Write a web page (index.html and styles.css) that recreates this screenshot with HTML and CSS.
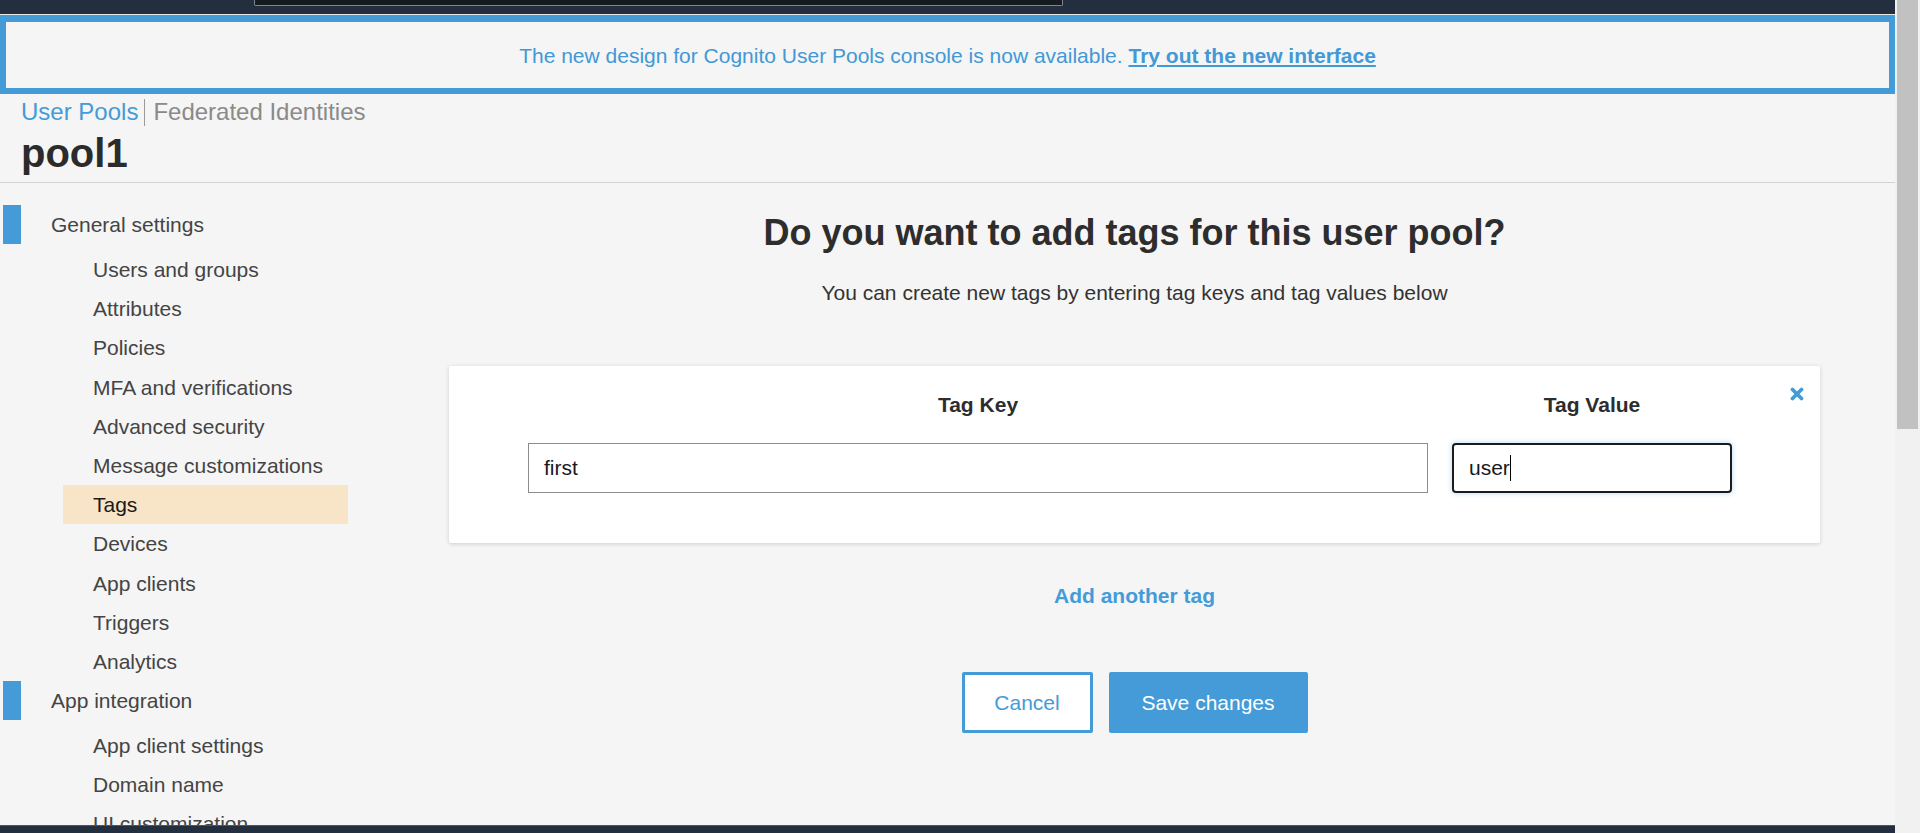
FILE: index.html
```html
<!DOCTYPE html>
<html lang="en">
<head>
<meta charset="utf-8">
<title>Cognito User Pools - pool1 - Tags</title>
<link rel="stylesheet" href="styles.css">
</head>
<body>
<div class="window">
  <div class="page">
    <header class="topbar">
      <div class="search"></div>
    </header>
    <div class="banner">
      <p>The new design for Cognito User Pools console is now available. <a href="#">Try out the new interface</a></p>
    </div>
    <div class="head">
      <nav class="tabs">
        <a class="tab active" href="#">User Pools</a>
        <span class="sep"></span>
        <a class="tab" href="#">Federated Identities</a>
      </nav>
      <h1 class="pool">pool1</h1>
    </div>
    <div class="body">
      <aside class="sidebar">
        <div class="section"><span class="marker"></span><span class="section-title">General settings</span></div>
        <ul class="items">
          <li>Users and groups</li>
          <li>Attributes</li>
          <li>Policies</li>
          <li>MFA and verifications</li>
          <li>Advanced security</li>
          <li>Message customizations</li>
          <li class="active">Tags</li>
          <li>Devices</li>
          <li>App clients</li>
          <li>Triggers</li>
          <li>Analytics</li>
        </ul>
        <div class="section"><span class="marker"></span><span class="section-title">App integration</span></div>
        <ul class="items">
          <li>App client settings</li>
          <li>Domain name</li>
          <li>UI customization</li>
        </ul>
      </aside>
      <main class="main">
        <h2 class="title">Do you want to add tags for this user pool?</h2>
        <p class="sub">You can create new tags by entering tag keys and tag values below</p>
        <section class="card">
          <button class="close" aria-label="Remove tag">
            <svg width="14" height="14" viewBox="0 0 14 14"><path d="M2.5 2.5 L11.5 11.5 M11.5 2.5 L2.5 11.5" stroke="#449bd8" stroke-width="3.8" stroke-linecap="round" fill="none"/></svg>
          </button>
          <div class="grid">
            <div class="label">Tag Key</div>
            <div class="label">Tag Value</div>
            <div class="field">first</div>
            <div class="field focused"><span class="val">user</span></div>
          </div>
        </section>
        <a class="add" href="#">Add another tag</a>
        <div class="actions">
          <button class="btn cancel">Cancel</button>
          <button class="btn save">Save changes</button>
        </div>
      </main>
    </div>
    <footer class="bottombar"></footer>
  </div>
  <div class="scrollbar"><div class="thumb"></div></div>
</div>
</body>
</html>
```

FILE: styles.css
```css
* { box-sizing: border-box; }
html, body { margin: 0; padding: 0; }
body {
  font-family: "Liberation Sans", Arial, sans-serif;
  background: #f1f1f1;
  height: 833px;
  overflow: hidden;
  color: #444;
}
.window { display: flex; height: 833px; }
.page {
  width: 1895px;
  flex: none;
  height: 833px;
  background: #f4f5f4;
  position: relative;
  overflow: hidden;
}
.scrollbar { width: 25px; flex: none; background: #f1f1f1; padding: 0 2px; }
.thumb { height: 429px; background: #c1c1c1; }

.topbar {
  height: 15px;
  background: #232f3e;
  border-bottom: 1px solid #e6e6e6;
  display: flex;
}
.search {
  margin-left: 254px;
  width: 809px;
  height: 6px;
  background: #161a21;
  border: 1px solid #7f868e;
  border-top: none;
  border-radius: 0 0 2px 2px;
}

.banner {
  height: 79px;
  border: 6px solid #449bd8;
  border-top-width: 7px;
  display: flex;
  align-items: center;
  justify-content: center;
}
.banner p {
  margin: 0;
  font-size: 21px;
  line-height: 25px;
  color: #4398d6;
}
.banner a { color: #4398d6; font-weight: bold; text-decoration: underline; }

.head {
  padding: 4px 0 6px 21px;
  border-bottom: 1px solid #d3d3d3;
}
.tabs { display: flex; align-items: center; height: 28px; }
.tab { font-size: 24px; line-height: 28px; color: #8a8a8a; text-decoration: none; }
.tab.active { color: #449bd8; }
.sep { width: 1px; height: 27px; background: #9a9a9a; margin: 0 8px 0 6px; }
.pool {
  margin: 4px 0 0;
  font-size: 40px;
  line-height: 46px;
  font-weight: bold;
  color: #2b2b2b;
}

.body { display: flex; }
.sidebar { width: 374px; flex: none; padding-top: 22px; }
.section { display: flex; align-items: center; height: 39px; }
.marker { width: 18px; height: 39px; margin-left: 3px; background: #449bd8; }
.section-title { margin-left: 30px; font-size: 21px; color: #444; }
.items { list-style: none; margin: 6px 0 0; padding: 0; }
.items li {
  height: 39.2px;
  line-height: 39.2px;
  margin-left: 63px;
  width: 285px;
  padding-left: 30px;
  font-size: 21px;
  color: #444;
  white-space: nowrap;
}
.items li.active { background: #f8e4c6; color: #1a1a1a; }

.main { flex: 1; padding: 29px 75px 0 75px; display: flex; flex-direction: column; align-items: stretch; }
.title {
  margin: 0;
  font-size: 36px;
  line-height: 42px;
  font-weight: bold;
  text-align: center;
  color: #2d2d2d;
}
.sub {
  margin: 26px 0 0;
  font-size: 21px;
  line-height: 26px;
  text-align: center;
  color: #333;
}
.card {
  margin-top: 60px;
  background: #fff;
  border-radius: 2px;
  box-shadow: 0 1px 4px rgba(0, 0, 0, 0.16);
  padding: 26px 88px 50px 79px;
  position: relative;
}
.close {
  position: absolute;
  top: 21px;
  right: 16px;
  width: 14px;
  height: 14px;
  padding: 0;
  border: none;
  background: none;
  display: block;
}
.close svg { display: block; }
.grid {
  display: grid;
  grid-template-columns: 900px 280px;
  column-gap: 24px;
  row-gap: 26px;
}
.label {
  font-size: 21px;
  line-height: 25px;
  font-weight: bold;
  text-align: center;
  color: #2d2d2d;
}
.field {
  height: 50px;
  border: 1px solid #8c8c8c;
  background: #fff;
  font-size: 21px;
  color: #16191f;
  padding-left: 15px;
  display: flex;
  align-items: center;
}
.field.focused {
  border: 2px solid #1b1b1b;
  border-radius: 4px;
  box-shadow: 0 0 5px 1px rgba(68, 155, 216, 0.28);
}
.val::after {
  content: "";
  display: inline-block;
  width: 1px;
  height: 26px;
  background: #000;
  vertical-align: -6px;
}
.add {
  margin-top: 40px;
  font-size: 21px;
  line-height: 25px;
  font-weight: bold;
  color: #449bd8;
  text-decoration: none;
  text-align: center;
}
.actions {
  margin-top: 64px;
  display: flex;
  justify-content: center;
  gap: 16px;
}
.btn {
  height: 61px;
  font-family: "Liberation Sans", Arial, sans-serif;
  font-size: 21px;
  border-radius: 2px;
  padding: 0;
}
.cancel { width: 131px; background: #fff; color: #449bd8; border: 3px solid #449bd8; }
.save { width: 199px; background: #449bd8; color: #fff; border: none; }

.bottombar {
  position: absolute;
  left: 0;
  right: 0;
  bottom: 0;
  height: 8px;
  background: #232f3e;
  border-top: 1px solid #4b5662;
}
```
